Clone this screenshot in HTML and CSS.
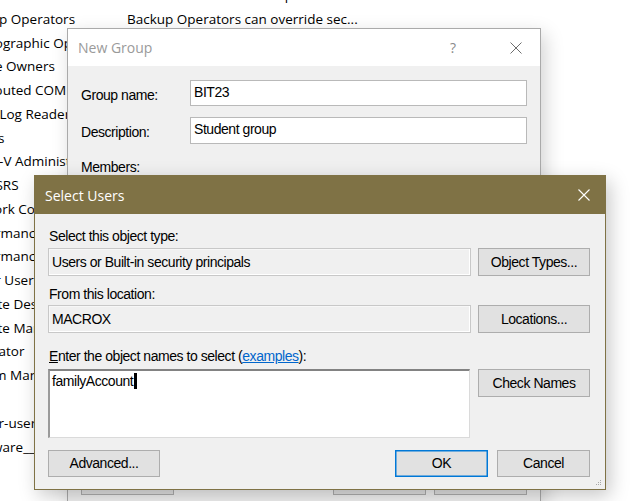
FILE: index.html
```html
<!DOCTYPE html>
<html>
<head>
<meta charset="utf-8">
<link rel="stylesheet" href="styles.css">
</head>
<body>
<div class="list">
  <div class="row"><span class="name">Administrators</span><span class="desc">Administrators have complete and...</span></div>
  <div class="row"><span class="name">Backup Operators</span><span class="desc">Backup Operators can override sec...</span></div>
  <div class="row"><span class="name">Cryptographic Operators</span><span class="desc"></span></div>
  <div class="row"><span class="name">Device Owners</span><span class="desc"></span></div>
  <div class="row"><span class="name">Distributed COM Users</span><span class="desc"></span></div>
  <div class="row"><span class="name">Event Log Readers</span><span class="desc"></span></div>
  <div class="row"><span class="name">Guests</span><span class="desc"></span></div>
  <div class="row"><span class="name">Hyper-V Administrators</span><span class="desc"></span></div>
  <div class="row"><span class="name">IIS_IUSRS</span><span class="desc"></span></div>
  <div class="row"><span class="name">Network Configuration Operators</span><span class="desc"></span></div>
  <div class="row"><span class="name">Performance Log Users</span><span class="desc"></span></div>
  <div class="row"><span class="name">Performance Monitor Users</span><span class="desc"></span></div>
  <div class="row"><span class="name">Power Users</span><span class="desc"></span></div>
  <div class="row"><span class="name">Remote Desktop Users</span><span class="desc"></span></div>
  <div class="row"><span class="name">Remote Management Users</span><span class="desc"></span></div>
  <div class="row"><span class="name">Replicator</span><span class="desc"></span></div>
  <div class="row"><span class="name">System Managed Accounts Group</span><span class="desc"></span></div>
  <div class="row"><span class="name">Users</span><span class="desc"></span></div>
  <div class="row"><span class="name">docker-users</span><span class="desc"></span></div>
  <div class="row"><span class="name">__vmware__</span><span class="desc"></span></div>
</div>

<div class="dlg newgroup">
  <div class="ng-title">
    <span class="ng-caption">New Group</span>
    <span class="ng-help">?</span>
    <svg class="ng-close" width="12" height="12" viewBox="0 0 12 12"><path d="M0.5 0.5 L11.5 11.5 M11.5 0.5 L0.5 11.5" stroke="#6d6d6d" stroke-width="1" fill="none"/></svg>
  </div>
  <div class="ng-body">
    <div class="ng-row"><span class="ng-label">Group name:</span><div class="ng-input">BIT23</div></div>
    <div class="ng-row second"><span class="ng-label">Description:</span><div class="ng-input tall">Student group</div></div>
    <div class="ng-members">Members:</div>
    <div class="ng-buttons">
      <div class="ng-btn"></div>
      <div class="ng-right">
        <div class="ng-btn"></div>
        <div class="ng-btn"></div>
      </div>
    </div>
  </div>
</div>

<div class="dlg select">
  <div class="su-title">
    <span class="su-caption">Select Users</span>
    <svg class="su-close" width="12" height="12" viewBox="0 0 12 12"><path d="M0.5 0.5 L11.5 11.5 M11.5 0.5 L0.5 11.5" stroke="#ffffff" stroke-width="1.1" fill="none"/></svg>
  </div>
  <div class="su-body">
    <div class="su-label first">Select this object type:</div>
    <div class="su-row">
      <div class="ro-box">Users or Built-in security principals</div>
      <div class="btn">Object Types...</div>
    </div>
    <div class="su-label second">From this location:</div>
    <div class="su-row">
      <div class="ro-box">MACROX</div>
      <div class="btn">Locations...</div>
    </div>
    <div class="su-label third"><u>E</u>nter the object names to select (<a class="link">examples</a>):</div>
    <div class="su-row">
      <div class="names">familyAccount<span class="caret"></span></div>
      <div class="btn">Check Names</div>
    </div>
    <div class="su-bottom">
      <div class="btn">Advanced...</div>
      <div class="su-right">
        <div class="btn ok">OK</div>
        <div class="btn cancel">Cancel</div>
      </div>
    </div>
  </div>
  <svg class="grip" width="6" height="6" viewBox="0 0 6 6">
    <rect x="4" y="0" width="1" height="1" fill="#a8a8a8"/>
    <rect x="2" y="2" width="1" height="1" fill="#a8a8a8"/>
    <rect x="4" y="2" width="1" height="1" fill="#a8a8a8"/>
    <rect x="0" y="4" width="1" height="1" fill="#a8a8a8"/>
    <rect x="2" y="4" width="1" height="1" fill="#a8a8a8"/>
    <rect x="4" y="4" width="1" height="1" fill="#a8a8a8"/>
  </svg>
</div>
</body>
</html>
```
FILE: styles.css
```css
html, body {
  margin: 0;
  padding: 0;
}
body {
  width: 630px;
  height: 501px;
  overflow: hidden;
  background: #ffffff;
  position: relative;
  font-family: "Liberation Sans", Arial, sans-serif;
}

/* background list */
.list {
  margin-top: -16px;
  margin-left: -39px;
  font-family: "Open Sans", "Noto Sans", sans-serif;
  font-size: 13.5px;
  color: #000;
}
.row {
  display: flex;
  height: 23.78px;
  line-height: 23.78px;
  white-space: nowrap;
}
.name {
  width: 166px;
  flex: none;
  overflow: hidden;
}
.desc {
  flex: none;
}

/* dialogs */
.dlg {
  position: absolute;
  box-sizing: border-box;
  background: #f0f0f0;
}

.newgroup {
  left: 67px;
  top: 28px;
  width: 474px;
  height: 473px;
  border: 1px solid #aaaaaa;
  border-bottom: none;
  box-shadow: 4px 6px 18px rgba(0,0,0,0.18);
}
.ng-title {
  height: 37px;
  background: #ffffff;
  display: flex;
  align-items: center;
  padding-left: 10px;
  padding-right: 18px;
}
.ng-caption {
  font-family: "Open Sans", "Noto Sans", sans-serif;
  font-size: 14px;
  color: #9a9a9a;
  flex: 1;
}
.ng-help {
  font-family: "Open Sans", sans-serif;
  font-size: 14px;
  color: #8a8a8a;
  margin-right: 54px;
}
.ng-close {
  display: block;
}
.ng-body {
  padding: 14px 13px 0 13px;
  font-size: 14px;
  letter-spacing: -0.45px;
  color: #000;
}
.ng-row {
  display: flex;
  align-items: center;
}
.ng-row.second {
  margin-top: 11px;
}
.ng-label {
  width: 109px;
  flex: none;
  padding-top: 3px;
}
.ng-input {
  box-sizing: border-box;
  width: 338px;
  height: 26px;
  background: #ffffff;
  border: 1px solid #b9b9b9;
  padding: 0 3px;
  line-height: 23px;
}
.ng-input.tall {
  height: 27px;
}
.ng-members {
  margin-top: 14px;
  line-height: 18px;
}
.ng-buttons {
  margin-top: 293px;
  display: flex;
  justify-content: space-between;
}
.ng-right {
  display: flex;
  gap: 8px;
}
.ng-btn {
  box-sizing: border-box;
  width: 93px;
  height: 26px;
  background: #e1e1e1;
  border: 1px solid #adadad;
}

/* select users */
.select {
  left: 34px;
  top: 175px;
  width: 572px;
  height: 315px;
  border: 1px solid #7f7245;
  box-shadow: 4px 6px 18px rgba(0,0,0,0.22);
}
.su-title {
  height: 38px;
  background: #7f7245;
  display: flex;
  align-items: center;
  padding-left: 10px;
  padding-right: 15px;
}
.su-caption {
  flex: 1;
  font-family: "Open Sans", "Noto Sans", sans-serif;
  font-size: 14px;
  color: #ffffff;
}
.su-close {
  display: block;
}
.su-body {
  padding: 0 15px 0 13px;
  font-size: 14px;
  letter-spacing: -0.45px;
  color: #000;
}
.su-label {
  line-height: 18px;
  height: 18px;
  padding-left: 1px;
}
.su-label.first { margin-top: 13px; margin-bottom: 3px; }
.su-label.second { margin-top: 9px; margin-bottom: 2px; }
.su-label.third { margin-top: 14px; margin-bottom: 4px; }
.su-row {
  display: flex;
  justify-content: space-between;
  align-items: flex-start;
}
.ro-box {
  box-sizing: border-box;
  width: 423px;
  height: 28px;
  border: 1px solid #c8c8c8;
  box-shadow: inset -1px -1px 0 #ffffff, inset 1px 1px 0 #f7f7f7;
  background: #f0f0f0;
  padding: 0 3px;
  line-height: 26px;
}
.btn {
  box-sizing: border-box;
  width: 112px;
  height: 28px;
  background: #e1e1e1;
  border: 1px solid #adadad;
  text-align: center;
  line-height: 26px;
}
.names {
  box-sizing: border-box;
  width: 422px;
  height: 69px;
  background: #ffffff;
  border-top: 2px solid #828282;
  border-left: 2px solid #9a9a9a;
  border-right: 1px solid #dadada;
  border-bottom: 1px solid #dadada;
  padding: 1px 2px;
  line-height: 18px;
}
.caret {
  display: inline-block;
  width: 3px;
  height: 16px;
  background: #000;
  vertical-align: -3px;
  margin-left: 1px;
}
.link {
  color: #0066cc;
  text-decoration: underline;
}
.su-bottom {
  margin-top: 12px;
  display: flex;
  justify-content: space-between;
}
.su-bottom .btn {
  width: 112px;
  height: 27px;
  line-height: 25px;
}
.su-right {
  display: flex;
  gap: 9px;
}
.su-bottom .btn.ok,
.su-bottom .btn.cancel {
  width: 93px;
}
.btn.ok {
  border: 1px solid #0078d7;
  box-shadow: inset 0 0 0 0.5px #0078d7;
}
.grip {
  position: absolute;
  right: 3px;
  bottom: 3px;
}
```
